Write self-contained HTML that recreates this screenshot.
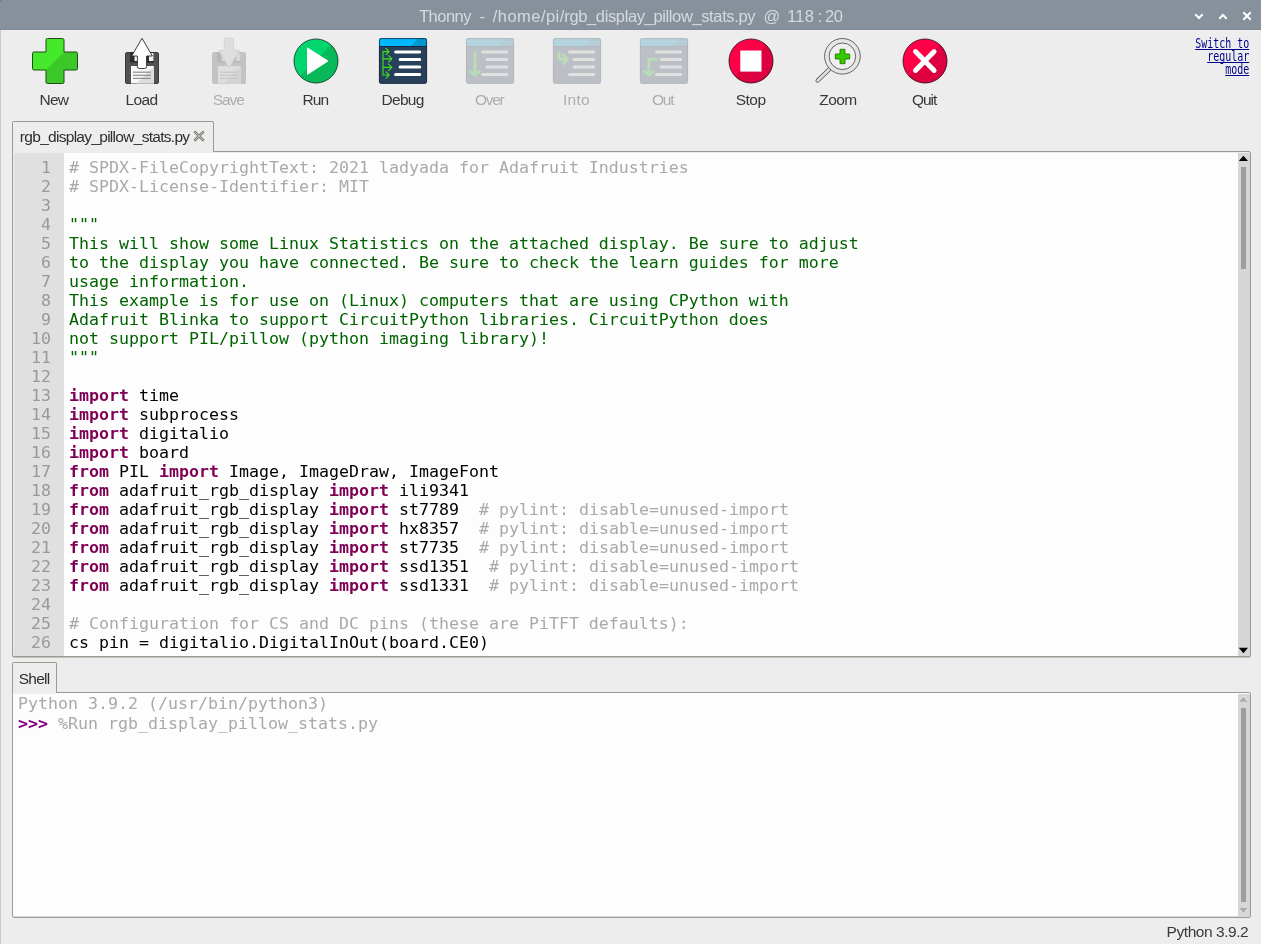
<!DOCTYPE html>
<html lang="en"><head><meta charset="utf-8"><title>Thonny - /home/pi/rgb_display_pillow_stats.py @ 118 : 20</title>
<style>
html,body{margin:0;padding:0}
body{width:1261px;height:944px;overflow:hidden;background:#ededed;position:relative;font-family:'Liberation Sans', sans-serif;}
.abs{position:absolute}
#title{left:0;top:0;width:1261px;height:30px;background:#87919b;}
#title:after{content:"";position:absolute;left:0;right:0;bottom:0;height:1px;background:#818b95}
#lb{left:0;top:30px;width:1px;height:914px;background:#c9c9c9}
.f{position:absolute;white-space:pre;transform-origin:0 0;font-family:'Liberation Sans', sans-serif;}
.frame{position:absolute;border:1px solid #9e9a91;border-radius:2px;box-sizing:border-box;background:#ededed}
.tab{position:absolute;border:1px solid #9e9a91;border-bottom:none;border-radius:2px 2px 0 0;box-sizing:border-box;background:#ededed}
.tabfill{position:absolute;background:#ededed}
.mono{font-family:'DejaVu Sans Mono', 'Liberation Mono', monospace;font-size:16.62px;white-space:pre;}
.ln{height:19px;line-height:19px}
#gutter{left:1px;top:1px;width:50px;height:503px;background:#e0e0e0;color:#999999;text-align:right;padding-right:0;box-sizing:border-box;overflow:hidden}
#gutter .ln{padding-right:13px}
#code{left:55.9px;top:1px;width:1169px;height:498px;color:#000;overflow:hidden}
#gutter .ln,#code .ln{position:relative;top:5px}
.c{color:#a9a9a9} .s{color:#006400} .k{color:#7f0055;font-weight:bold}
.sb{position:absolute;width:12px;background:#d6d6d6}
.thumb{position:absolute;left:3px;width:5px;background:#9e9e9e}
.arr{position:absolute;left:1px;width:0;height:0;border-left:5px solid transparent;border-right:5px solid transparent}
.up{border-bottom:5px solid #000} .dn{border-top:5px solid #000}
.dis.up{border-bottom-color:#b4b4b4} .dis.dn{border-top-color:#b4b4b4}
#link{right:12px;top:36.5px;text-align:right;font-family:'DejaVu Sans Mono', 'Liberation Mono', monospace;font-size:13.5px;line-height:13px;color:#00008b;white-space:pre;transform:scaleX(0.738);text-decoration-skip-ink:none;transform-origin:100% 0;text-decoration:underline}
svg{position:absolute;overflow:visible}
#app{position:absolute;left:0;top:0;width:1261px;height:944px;overflow:hidden;background:#ededed;will-change:transform}
</style></head><body><div id="app">
<div id="title" class="abs"></div>
<div id="lb" class="abs"></div>
<div class="abs" style="left:0;top:0;width:2px;height:1px;background:#6b7e88"></div><div class="abs" style="left:0;top:1px;width:1px;height:1px;background:#6b7e88"></div>
<div id="link" class="abs">Switch to
regular
mode</div>

<!-- editor notebook -->
<div class="frame" style="left:12px;top:151px;width:1239px;height:506px;box-shadow:0 1px 0 rgba(158,154,145,.5)">
  <div id="gutter" class="abs mono"><div class="ln">1</div><div class="ln">2</div><div class="ln">3</div><div class="ln">4</div><div class="ln">5</div><div class="ln">6</div><div class="ln">7</div><div class="ln">8</div><div class="ln">9</div><div class="ln">10</div><div class="ln">11</div><div class="ln">12</div><div class="ln">13</div><div class="ln">14</div><div class="ln">15</div><div class="ln">16</div><div class="ln">17</div><div class="ln">18</div><div class="ln">19</div><div class="ln">20</div><div class="ln">21</div><div class="ln">22</div><div class="ln">23</div><div class="ln">24</div><div class="ln">25</div><div class="ln">26</div></div>
  <div class="abs" style="left:51px;top:1px;width:1174px;height:503px;background:#fdfdfd"></div>
  <div id="code" class="abs mono"><div class="ln"><span class="c"># SPDX-FileCopyrightText: 2021 ladyada for Adafruit Industries</span></div><div class="ln"><span class="c"># SPDX-License-Identifier: MIT</span></div><div class="ln"></div><div class="ln"><span class="s">"""</span></div><div class="ln"><span class="s">This will show some Linux Statistics on the attached display. Be sure to adjust</span></div><div class="ln"><span class="s">to the display you have connected. Be sure to check the learn guides for more</span></div><div class="ln"><span class="s">usage information.</span></div><div class="ln"><span class="s">This example is for use on (Linux) computers that are using CPython with</span></div><div class="ln"><span class="s">Adafruit Blinka to support CircuitPython libraries. CircuitPython does</span></div><div class="ln"><span class="s">not support PIL/pillow (python imaging library)!</span></div><div class="ln"><span class="s">"""</span></div><div class="ln"></div><div class="ln"><span class="k">import</span> time</div><div class="ln"><span class="k">import</span> subprocess</div><div class="ln"><span class="k">import</span> digitalio</div><div class="ln"><span class="k">import</span> board</div><div class="ln"><span class="k">from</span> PIL <span class="k">import</span> Image, ImageDraw, ImageFont</div><div class="ln"><span class="k">from</span> adafruit_rgb_display <span class="k">import</span> ili9341</div><div class="ln"><span class="k">from</span> adafruit_rgb_display <span class="k">import</span> st7789  <span class="c"># pylint: disable=unused-import</span></div><div class="ln"><span class="k">from</span> adafruit_rgb_display <span class="k">import</span> hx8357  <span class="c"># pylint: disable=unused-import</span></div><div class="ln"><span class="k">from</span> adafruit_rgb_display <span class="k">import</span> st7735  <span class="c"># pylint: disable=unused-import</span></div><div class="ln"><span class="k">from</span> adafruit_rgb_display <span class="k">import</span> ssd1351  <span class="c"># pylint: disable=unused-import</span></div><div class="ln"><span class="k">from</span> adafruit_rgb_display <span class="k">import</span> ssd1331  <span class="c"># pylint: disable=unused-import</span></div><div class="ln"></div><div class="ln"><span class="c"># Configuration for CS and DC pins (these are PiTFT defaults):</span></div><div class="ln">cs_pin = digitalio.DigitalInOut(board.CE0)</div></div>
  <div class="sb" style="left:1225px;top:1px;height:503px"><svg width="12" height="503" style="left:0;top:0"><path d="M0.8 8 L5.4 2.8 L10 8 Z" fill="#000"/><path d="M0.75 494.8 L5.4 500.2 L10.05 494.8 Z" fill="#000"/></svg><div class="thumb" style="top:14px;height:101.6px"></div></div>
</div>
<div class="tab" style="left:12px;top:121px;width:202px;height:31px"></div>
<div class="tabfill" style="left:13px;top:151px;width:200px;height:2px"></div>

<!-- shell notebook -->
<div class="frame" style="left:12px;top:692px;width:1239px;height:226px;background:#fdfdfd;box-shadow:inset 0 -1px 0 rgba(158,154,145,.35)">
  <div class="abs mono" style="left:5px;top:0.6px;color:#a9a9a9"><div class="ln">Python 3.9.2 (/usr/bin/python3)</div><div class="ln" style="margin-top:1px"><span style="color:#800080;font-weight:bold">&gt;&gt;&gt;</span> %Run rgb_display_pillow_stats.py</div></div>
  <div class="sb" style="left:1225px;top:1px;height:223px"><svg width="12" height="223" style="left:0;top:0"><path d="M0.9 7.7 L5.4 2.6 L9.9 7.7 Z" fill="#adadad"/><path d="M0.9 214 L5.4 219.3 L9.9 214 Z" fill="#adadad"/><path d="M0.7 7.3 L5.4 2.1 L10.1 7.3 M0.7 214.5 L5.4 219.8 L10.1 214.5" fill="none" stroke="#f2f2f2" stroke-width="0.8"/></svg><div class="thumb" style="top:14px;height:194px"></div></div>
</div>
<div class="tab" style="left:12px;top:662px;width:45px;height:31px"></div>
<div class="tabfill" style="left:13px;top:692px;width:43px;height:2px"></div>

<svg width="1261" height="944" viewBox="0 0 1261 944" style="left:0;top:0">
<defs>
</defs>
<g fill="none" stroke="#fff" stroke-width="2" stroke-linecap="square">
<path d="M1196 15 L1199 18 L1202 15"/>
<path d="M1220 18 L1223 15 L1226 18"/>
<path d="M1244 13 L1250 19 M1250 13 L1244 19"/>
</g>
<clipPath id="cpl"><path d="M47.5 38.5 h15 a1.5 1.5 0 0 1 1.5 1.5 v12 h12 a1.5 1.5 0 0 1 1.5 1.5 v15 a1.5 1.5 0 0 1 -1.5 1.5 h-12 v12 a1.5 1.5 0 0 1 -1.5 1.5 h-15 a1.5 1.5 0 0 1 -1.5 -1.5 v-12 h-12 a1.5 1.5 0 0 1 -1.5 -1.5 v-15 a1.5 1.5 0 0 1 1.5 -1.5 h12 v-12 a1.5 1.5 0 0 1 1.5 -1.5 z"/></clipPath>
<path d="M47.5 38.5 h15 a1.5 1.5 0 0 1 1.5 1.5 v12 h12 a1.5 1.5 0 0 1 1.5 1.5 v15 a1.5 1.5 0 0 1 -1.5 1.5 h-12 v12 a1.5 1.5 0 0 1 -1.5 1.5 h-15 a1.5 1.5 0 0 1 -1.5 -1.5 v-12 h-12 a1.5 1.5 0 0 1 -1.5 -1.5 v-15 a1.5 1.5 0 0 1 1.5 -1.5 h12 v-12 a1.5 1.5 0 0 1 1.5 -1.5 z" fill="#45e82b"/>
<path clip-path="url(#cpl)" d="M86 30 L86 92 L24 92 Z" fill="#3cc828"/>
<path d="M47.5 38.5 h15 a1.5 1.5 0 0 1 1.5 1.5 v12 h12 a1.5 1.5 0 0 1 1.5 1.5 v15 a1.5 1.5 0 0 1 -1.5 1.5 h-12 v12 a1.5 1.5 0 0 1 -1.5 1.5 h-15 a1.5 1.5 0 0 1 -1.5 -1.5 v-12 h-12 a1.5 1.5 0 0 1 -1.5 -1.5 v-15 a1.5 1.5 0 0 1 1.5 -1.5 h12 v-12 a1.5 1.5 0 0 1 1.5 -1.5 z" fill="none" stroke="#1f4d17" stroke-width="1"/>
<rect x="125.5" y="52.5" width="33" height="31" rx="1.5" fill="#515151" stroke="#3a3a3a" stroke-width="1"/>
<rect x="130" y="52" width="24" height="10.5" fill="#2b2b2b"/>
<rect x="134.5" y="53" width="3.5" height="8" fill="#f4f4f4"/>
<rect x="149" y="53" width="4.5" height="8" fill="#f4f4f4"/>
<rect x="131" y="66" width="23" height="17.5" fill="#f7f7f7"/>
<path d="M154 66 L154 83.5 L136.5 83.5 Z" fill="#dcdcdc"/>
<rect x="133" y="71.60000000000001" width="18" height="1.2" fill="#909090"/>
<rect x="133" y="74.7" width="18" height="1.2" fill="#909090"/>
<rect x="133" y="77.80000000000001" width="18" height="1.2" fill="#909090"/>
<path d="M142 38.3 L152.3 56 L146.6 56 L146.6 66.5 a2 2 0 0 1 -2 2 L139.4 68.5 a2 2 0 0 1 -2 -2 L137.4 56 L131.7 56 Z" fill="#fff" stroke="#2a2a2a" stroke-width="0.9" stroke-linejoin="round"/>
<rect x="212.5" y="52.5" width="33" height="31" rx="1.5" fill="#c3c3c3" stroke="#c3c3c3" stroke-width="1"/>
<rect x="217" y="52" width="24" height="10.5" fill="#b7b7b7"/>
<rect x="221.5" y="53" width="3.5" height="8" fill="#d8d8d8"/>
<rect x="236" y="53" width="4.5" height="8" fill="#d8d8d8"/>
<rect x="218" y="66" width="23" height="17.5" fill="#dedede"/>
<path d="M241 66 L241 83.5 L223.5 83.5 Z" fill="#d4d4d4"/>
<rect x="220" y="71.60000000000001" width="18" height="1.2" fill="#c6c6c6"/>
<rect x="220" y="74.7" width="18" height="1.2" fill="#c6c6c6"/>
<rect x="220" y="77.80000000000001" width="18" height="1.2" fill="#c6c6c6"/>
<path d="M224.3 40 a2 2 0 0 1 2 -2 L231.6 38 a2 2 0 0 1 2 2 L233.6 50.3 L239.3 50.3 L229 68.3 L218.7 50.3 L224.3 50.3 Z" fill="#dedede" stroke="#cfcfcf" stroke-width="0.8" stroke-linejoin="round"/>
<clipPath id="cc316"><circle cx="316" cy="61" r="22"/></clipPath>
<circle cx="316" cy="61" r="22" fill="#00d56e"/>
<path clip-path="url(#cc316)" d="M346 30 L346 91 L285 91 Z" fill="#07b95b"/>
<circle cx="316" cy="61" r="22" fill="none" stroke="#1f3d2b" stroke-width="0.9"/>
<path d="M307.6 48.2 L327.6 60.9 L307.6 74 Z" fill="#fff" stroke="#fff" stroke-width="1.2" stroke-linejoin="round"/>
<clipPath id="cc751"><circle cx="751" cy="61" r="22"/></clipPath>
<circle cx="751" cy="61" r="22" fill="#ff0048"/>
<path clip-path="url(#cc751)" d="M781 30 L781 91 L720 91 Z" fill="#dc0040"/>
<circle cx="751" cy="61" r="22" fill="none" stroke="#3a1a22" stroke-width="0.9"/>
<rect x="740.3" y="50.5" width="21.2" height="21.1" fill="#fff"/>
<clipPath id="cc925"><circle cx="925" cy="61" r="22"/></clipPath>
<circle cx="925" cy="61" r="22" fill="#ff0048"/>
<path clip-path="url(#cc925)" d="M955 30 L955 91 L894 91 Z" fill="#dc0040"/>
<circle cx="925" cy="61" r="22" fill="none" stroke="#3a1a22" stroke-width="0.9"/>
<path d="M915.5 51.6 L934.1 70.4 M934.1 51.6 L915.5 70.4" stroke="#fff" stroke-width="5" stroke-linecap="round" fill="none"/>
<clipPath id="cw379"><rect x="379" y="38.2" width="48" height="45.5" rx="2.2"/></clipPath>
<g clip-path="url(#cw379)">
<rect x="379" y="38" width="48" height="46" fill="#27405c"/>
<rect x="379" y="38" width="48" height="8.4" fill="#00b8ff"/>
<path d="M418.5 38 L427 38 L427 46.4 L410.5 46.4 Z" fill="#0097d0"/>
<rect x="379" y="46" width="48" height="0.9" fill="#16222f"/>
</g>
<rect x="379.4" y="38.6" width="47.2" height="44.7" rx="2" fill="none" stroke="#1c2a3a" stroke-width="0.8"/>
<g stroke="#fff" stroke-width="3" stroke-linecap="round">
<path d="M395.6 52.1 H419.7 M400.1 59.5 H419.7 M400.1 66.9 H419.7 M395.6 74.4 H419.7"/>
</g>
<g fill="none" stroke="#3be222" stroke-width="1.15" stroke-linecap="round" stroke-linejoin="round">
<path d="M383 51.6 V75 M383 51.6 H389 M386 48.5 L389.2 51.6 L386 54.7 M383 58.8 H391.8 M388.5 55.6 L391.9 58.8 L388.5 62 M383 67.4 H391.8 M388.5 64.2 L391.9 67.4 L388.5 70.6 M383 75 H389 M386 71.9 L389.2 75 L386 78.1"/>
</g>
<clipPath id="cw466"><rect x="466" y="38.2" width="48" height="45.5" rx="2.2"/></clipPath>
<g clip-path="url(#cw466)">
<rect x="466" y="38" width="48" height="46" fill="#bcc0c6"/>
<rect x="466" y="38" width="48" height="8.4" fill="#b4d4df"/>
<path d="M505.5 38 L514 38 L514 46.4 L497.5 46.4 Z" fill="#b6cdd6"/>
<rect x="466" y="46" width="48" height="0.9" fill="#b3b7bb"/>
</g>
<rect x="466.4" y="38.6" width="47.2" height="44.7" rx="2" fill="none" stroke="#b1b5ba" stroke-width="0.8"/>
<g stroke="#e1e1e1" stroke-width="3" stroke-linecap="round">
<path d="M482.6 52.1 H506.7 M487.1 59.5 H506.7 M487.1 66.9 H506.7 M482.6 74.4 H506.7"/>
</g>
<g fill="none" stroke="#b9dcb6" stroke-width="3" stroke-linecap="round" stroke-linejoin="round">
<path d="M475 52.2 V74.8 M470.6 71.6 L475 75.2 L479.4 71.6"/>
</g>
<clipPath id="cw553"><rect x="553" y="38.2" width="48" height="45.5" rx="2.2"/></clipPath>
<g clip-path="url(#cw553)">
<rect x="553" y="38" width="48" height="46" fill="#bcc0c6"/>
<rect x="553" y="38" width="48" height="8.4" fill="#b4d4df"/>
<path d="M592.5 38 L601 38 L601 46.4 L584.5 46.4 Z" fill="#b6cdd6"/>
<rect x="553" y="46" width="48" height="0.9" fill="#b3b7bb"/>
</g>
<rect x="553.4" y="38.6" width="47.2" height="44.7" rx="2" fill="none" stroke="#b1b5ba" stroke-width="0.8"/>
<g stroke="#e1e1e1" stroke-width="3" stroke-linecap="round">
<path d="M569.6 52.1 H593.7 M574.1 59.5 H593.7 M574.1 66.9 H593.7 M569.6 74.4 H593.7"/>
</g>
<g fill="none" stroke="#b9dcb6" stroke-width="3" stroke-linecap="round" stroke-linejoin="round">
<path d="M559 52.4 V59.3 H566.6 M563.6 55 L567 59.3 L563.6 63.6"/>
</g>
<clipPath id="cw640"><rect x="640" y="38.2" width="48" height="45.5" rx="2.2"/></clipPath>
<g clip-path="url(#cw640)">
<rect x="640" y="38" width="48" height="46" fill="#bcc0c6"/>
<rect x="640" y="38" width="48" height="8.4" fill="#b4d4df"/>
<path d="M679.5 38 L688 38 L688 46.4 L671.5 46.4 Z" fill="#b6cdd6"/>
<rect x="640" y="46" width="48" height="0.9" fill="#b3b7bb"/>
</g>
<rect x="640.4" y="38.6" width="47.2" height="44.7" rx="2" fill="none" stroke="#b1b5ba" stroke-width="0.8"/>
<g stroke="#e1e1e1" stroke-width="3" stroke-linecap="round">
<path d="M656.6 52.1 H680.7 M661.1 59.5 H680.7 M661.1 66.9 H680.7 M656.6 74.4 H680.7"/>
</g>
<g fill="none" stroke="#b9dcb6" stroke-width="3" stroke-linecap="round" stroke-linejoin="round">
<path d="M656.6 59.3 H649 V74.8 M644.6 71.6 L649 75.2 L653.4 71.6"/>
</g>
<path d="M829.6 69 L817.6 80.6" stroke="#555" stroke-width="4.2" stroke-linecap="round"/>
<path d="M829.6 69 L817.6 80.6" stroke="#e2e2e2" stroke-width="2.6" stroke-linecap="round"/>
<circle cx="842.4" cy="56.3" r="17.8" fill="#e6e6e6" stroke="#555" stroke-width="0.9"/>
<circle cx="842.4" cy="56.3" r="13.3" fill="#efefef" stroke="#555" stroke-width="0.9"/>
<path d="M840 49.3 h5 v4.7 h4.7 v5 h-4.7 v4.7 h-5 v-4.7 h-4.7 v-5 h4.7 z" fill="#33cc00" stroke="#1d6b00" stroke-width="0.8" stroke-linejoin="round"/>
<path d="M195.1 132.1 L203 140 M203 132.1 L195.1 140" stroke="#7e7e76" stroke-width="2.6" stroke-linecap="round"/>
<path d="M195.1 132.1 L203 140 M203 132.1 L195.1 140" stroke="#c9c9c1" stroke-width="0.9" stroke-linecap="round"/>
</svg>
<span class="f" style="left:39.40px;top:90.97px;font-size:15.5px;line-height:17.809px;color:#383838;letter-spacing:-0.700px;">New </span><span class="f" style="left:125.46px;top:90.97px;font-size:15.5px;line-height:17.809px;color:#383838;letter-spacing:-0.595px;">Load </span><span class="f" style="left:212.67px;top:90.97px;font-size:15.5px;line-height:17.809px;color:#adadad;letter-spacing:-1.012px;">Save </span><span class="f" style="left:302.40px;top:90.97px;font-size:15.5px;line-height:17.809px;color:#383838;letter-spacing:-0.858px;">Run </span><span class="f" style="left:381.46px;top:90.97px;font-size:15.5px;line-height:17.809px;color:#383838;letter-spacing:-0.679px;">Debug </span><span class="f" style="left:474.99px;top:90.97px;font-size:15.5px;line-height:17.809px;color:#adadad;letter-spacing:-1.293px;">Over </span><span class="f" style="left:563.05px;top:90.97px;font-size:15.5px;line-height:17.809px;color:#adadad;letter-spacing:0.270px;">Into </span><span class="f" style="left:651.88px;top:90.97px;font-size:15.5px;line-height:17.809px;color:#adadad;letter-spacing:-1.206px;">Out </span><span class="f" style="left:735.73px;top:90.97px;font-size:15.5px;line-height:17.809px;color:#383838;letter-spacing:-0.526px;">Stop </span><span class="f" style="left:819.21px;top:90.97px;font-size:15.5px;line-height:17.809px;color:#383838;letter-spacing:-0.515px;">Zoom </span><span class="f" style="left:911.92px;top:90.97px;font-size:15.5px;line-height:17.809px;color:#383838;letter-spacing:-1.042px;">Quit </span><span class="f" style="left:419.07px;top:7.07px;font-size:16.5px;line-height:18.959px;color:#d6dade;letter-spacing:-0.533px;">Thonny  </span><span class="f" style="left:479.42px;top:7.07px;font-size:16.5px;line-height:18.959px;color:#d6dade;letter-spacing:0.000px;">-  </span><span class="f" style="left:492.82px;top:7.07px;font-size:16.5px;line-height:18.959px;color:#d6dade;letter-spacing:0.456px;">/home/pi/</span><span class="f" style="left:564.33px;top:7.07px;font-size:16.5px;line-height:18.959px;color:#d6dade;letter-spacing:-0.373px;">rgb_display_pillow_stats.py  </span><span class="f" style="left:763.49px;top:7.07px;font-size:16.5px;line-height:18.959px;color:#d6dade;letter-spacing:0.000px;">@  </span><span class="f" style="left:787.19px;top:7.07px;font-size:16.5px;line-height:18.959px;color:#d6dade;letter-spacing:0.212px;">118 </span><span class="f" style="left:817.72px;top:7.07px;font-size:16.5px;line-height:18.959px;color:#d6dade;letter-spacing:0.000px;">: </span><span class="f" style="left:825.07px;top:7.07px;font-size:16.5px;line-height:18.959px;color:#d6dade;letter-spacing:-0.540px;">20</span><span class="f" style="left:19.87px;top:127.97px;font-size:15.5px;line-height:17.809px;color:#2e2e2e;letter-spacing:-0.710px;">rgb_display_pillow_stats.py </span><span class="f" style="left:18.68px;top:670.47px;font-size:15.5px;line-height:17.809px;color:#2e2e2e;letter-spacing:-0.710px;">Shell </span><span class="f" style="left:1166.59px;top:922.97px;font-size:15.5px;line-height:17.809px;color:#3a3a3a;letter-spacing:-0.447px;">Python 3.9.2</span>
</div></body></html>
